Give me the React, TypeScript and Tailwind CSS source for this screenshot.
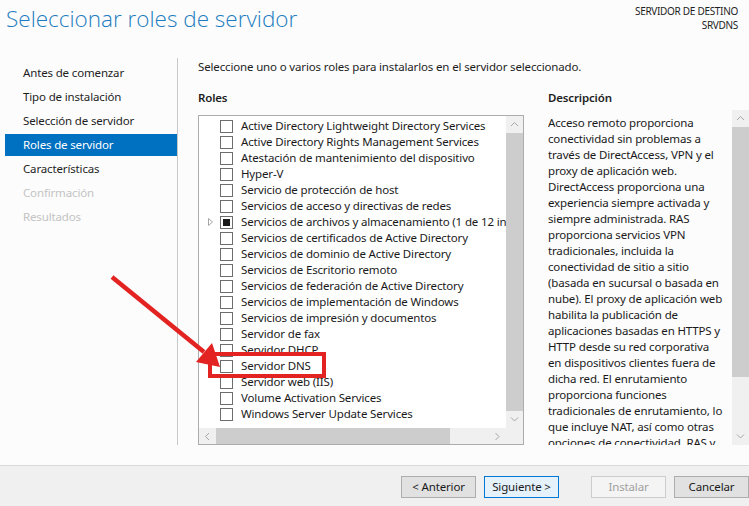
const roles: { label: string; state?: "partial"; expand?: boolean }[] = [
  { label: "Active Directory Lightweight Directory Services" },
  { label: "Active Directory Rights Management Services" },
  { label: "Atestación de mantenimiento del dispositivo" },
  { label: "Hyper-V" },
  { label: "Servicio de protección de host" },
  { label: "Servicios de acceso y directivas de redes" },
  { label: "Servicios de archivos y almacenamiento (1 de 12 instalados)", state: "partial", expand: true },
  { label: "Servicios de certificados de Active Directory" },
  { label: "Servicios de dominio de Active Directory" },
  { label: "Servicios de Escritorio remoto" },
  { label: "Servicios de federación de Active Directory" },
  { label: "Servicios de implementación de Windows" },
  { label: "Servicios de impresión y documentos" },
  { label: "Servidor de fax" },
  { label: "Servidor DHCP" },
  { label: "Servidor DNS" },
  { label: "Servidor web (IIS)" },
  { label: "Volume Activation Services" },
  { label: "Windows Server Update Services" },
];

const steps = [
  { label: "Antes de comenzar" },
  { label: "Tipo de instalación" },
  { label: "Selección de servidor" },
  { label: "Roles de servidor", active: true },
  { label: "Características" },
  { label: "Confirmación", disabled: true },
  { label: "Resultados", disabled: true },
];

const description = [
  "Acceso remoto proporciona",
  "conectividad sin problemas a",
  "través de DirectAccess, VPN y el",
  "proxy de aplicación web.",
  "DirectAccess proporciona una",
  "experiencia siempre activada y",
  "siempre administrada. RAS",
  "proporciona servicios VPN",
  "tradicionales, incluida la",
  "conectividad de sitio a sitio",
  "(basada en sucursal o basada en",
  "nube). El proxy de aplicación web",
  "habilita la publicación de",
  "aplicaciones basadas en HTTPS y",
  "HTTP desde su red corporativa",
  "en dispositivos clientes fuera de",
  "dicha red. El enrutamiento",
  "proporciona funciones",
  "tradicionales de enrutamiento, lo",
  "que incluye NAT, así como otras",
  "opciones de conectividad. RAS y",
  "enrutamiento se implementan",
];

function Chevron({ dir }: { dir: "up" | "down" | "left" | "right" }) {
  const d = {
    up: "M1 5 L4.5 1.5 L8 5",
    down: "M1 1.5 L4.5 5 L8 1.5",
    left: "M5 1 L1.5 4.5 L5 8",
    right: "M1.5 1 L5 4.5 L1.5 8",
  }[dir];
  const vertical = dir === "up" || dir === "down";
  return (
    <svg width={vertical ? 9 : 7} height={vertical ? 7 : 9} viewBox={vertical ? "0 0 9 7" : "0 0 7 9"}>
      <path d={d} fill="none" stroke="#a6a6a6" strokeWidth="1" />
    </svg>
  );
}

function RoleRow({ label, state, expand }: { label: string; state?: "partial"; expand?: boolean }) {
  return (
    <div className="flex h-[16px] items-center whitespace-nowrap">
      <div className="flex w-[21px] shrink-0 justify-center pl-[2px]">
        {expand && (
          <svg width="5" height="8" viewBox="0 0 5 8">
            <path d="M0.5 0.5 L4.5 4 L0.5 7.5 Z" fill="none" stroke="#a6a6a6" strokeWidth="1" />
          </svg>
        )}
      </div>
      <div className="flex h-[13px] w-[13px] shrink-0 items-center justify-center border border-[#6d6d6d] bg-white">
        {state === "partial" && <div className="h-[7px] w-[7px] bg-[#1a1a1a]" />}
      </div>
      <span className="ml-[8px] text-[#1a1a1a]">{label}</span>
    </div>
  );
}

function Button({ children, variant }: { children: React.ReactNode; variant?: "primary" | "disabled" }) {
  const cls =
    variant === "primary"
      ? "border-[#0078d7] bg-[#e5f1fb] text-[#1a1a1a]"
      : variant === "disabled"
        ? "border-[#cccccc] bg-[#f4f4f4] text-[#a0a0a0]"
        : "border-[#adadad] bg-[#e1e1e1] text-[#1a1a1a]";
  return (
    <div className={`flex h-[22px] w-[75px] items-center justify-center border ${cls}`}>{children}</div>
  );
}

export default function App() {
  return (
    <div className="relative flex h-[506px] w-[749px] flex-col overflow-hidden bg-[#fcfcfc] font-['Noto_Sans',sans-serif] text-[11.5px] tracking-[-0.15px] text-[#1e1e1e]">
      {/* header */}
      <div className="flex h-[58px] shrink-0 justify-between">
        <div className="pl-[6px] pt-[3px] font-['Open_Sans',sans-serif] text-[22.5px] font-light leading-[32px] tracking-normal text-[#1d7cbf]">
          Seleccionar roles de servidor
        </div>
        <div className="pr-[11px] pt-[4px] text-right text-[10px] leading-[14px] tracking-[-0.3px] text-[#1e1e1e]">
          <div>SERVIDOR DE DESTINO</div>
          <div>SRVDNS</div>
        </div>
      </div>

      {/* body */}
      <div className="flex h-[387px] shrink-0">
        <div className="w-[178px] shrink-0 border-r border-[#c8c8c8] pl-[5px] pt-[4px]">
          {steps.map((s) => (
            <div
              key={s.label}
              className={`mb-[2px] flex h-[22px] items-center pl-[18px] ${
                s.active ? "bg-[#0070c0] text-white" : s.disabled ? "text-[#c3c3c3]" : "text-[#1e1e1e]"
              }`}
            >
              {s.label}
            </div>
          ))}
        </div>

        <div className="flex min-w-0 flex-1 flex-col pl-[20px] pt-[1px]">
          <div className="h-[16px] leading-[16px]">
            Seleccione uno o varios roles para instalarlos en el servidor seleccionado.
          </div>
          <div className="mt-[15px] flex gap-[24px]">
            {/* roles */}
            <div className="w-[326px] shrink-0">
              <div className="h-[16px] font-semibold leading-[16px]">Roles</div>
              <div className="mt-[9px] flex h-[330px] flex-col border border-[#acacac] bg-white">
                <div className="flex min-h-0 flex-1">
                  <div className="min-w-0 flex-1 overflow-hidden">
                    <div className="mt-[2px]">
                      {roles.map((r) => (
                        <RoleRow key={r.label} {...r} />
                      ))}
                    </div>
                  </div>
                  <div className="flex w-[17px] shrink-0 flex-col bg-[#f0f0f0]">
                    <div className="flex h-[17px] items-center justify-center">
                      <Chevron dir="up" />
                    </div>
                    <div className="flex-1 bg-[#cdcdcd]" />
                    <div className="flex h-[17px] items-center justify-center">
                      <Chevron dir="down" />
                    </div>
                  </div>
                </div>
                <div className="flex h-[16px] shrink-0 bg-[#f0f0f0]">
                  <div className="flex w-[17px] items-center justify-center">
                    <Chevron dir="left" />
                  </div>
                  <div className="w-[234px] bg-[#cdcdcd]" />
                  <div className="flex-1" />
                  <div className="flex w-[17px] items-center justify-center">
                    <Chevron dir="right" />
                  </div>
                  <div className="w-[17px]" />
                </div>
              </div>
            </div>

            {/* description */}
            <div className="min-w-0 flex-1">
              <div className="h-[16px] font-semibold leading-[16px]">Descripción</div>
              <div className="mt-[4px] flex h-[335px]">
                <div className="min-w-0 flex-1 overflow-hidden pt-[5px] leading-[16px] text-[#1a1a1a]">
                  {description.map((l) => (
                    <div key={l} className="whitespace-nowrap">
                      {l}
                    </div>
                  ))}
                </div>
                <div className="flex w-[17px] shrink-0 flex-col bg-[#f0f0f0]">
                  <div className="flex h-[17px] items-center justify-center">
                    <Chevron dir="up" />
                  </div>
                  <div className="h-[250px] bg-[#cdcdcd]" />
                  <div className="flex-1" />
                  <div className="flex h-[17px] items-center justify-center">
                    <Chevron dir="down" />
                  </div>
                </div>
              </div>
            </div>
          </div>
        </div>
      </div>

      <div className="h-[20px] shrink-0" />

      {/* footer */}
      <div className="flex flex-1 items-start border-t border-[#d9d9d9] bg-[#f0f0f0] pl-[401px] pt-[10px]">
        <Button>&lt; Anterior</Button>
        <div className="ml-[8px]">
          <Button variant="primary">Siguiente &gt;</Button>
        </div>
        <div className="ml-[32px]">
          <Button variant="disabled">Instalar</Button>
        </div>
        <div className="ml-[8px]">
          <Button>Cancelar</Button>
        </div>
      </div>

      {/* annotation overlay */}
      <svg className="pointer-events-none absolute left-0 top-0" width="749" height="506">
        <line x1="112" y1="277" x2="204" y2="352" stroke="#e32222" strokeWidth="4.5" />
        <polygon points="196,362 212,343 220,367" fill="#e32222" />
      </svg>
      <div className="pointer-events-none absolute left-[208px] top-[352px] h-[26px] w-[118px] border-[4px] border-[#e32222]" />
    </div>
  );
}
